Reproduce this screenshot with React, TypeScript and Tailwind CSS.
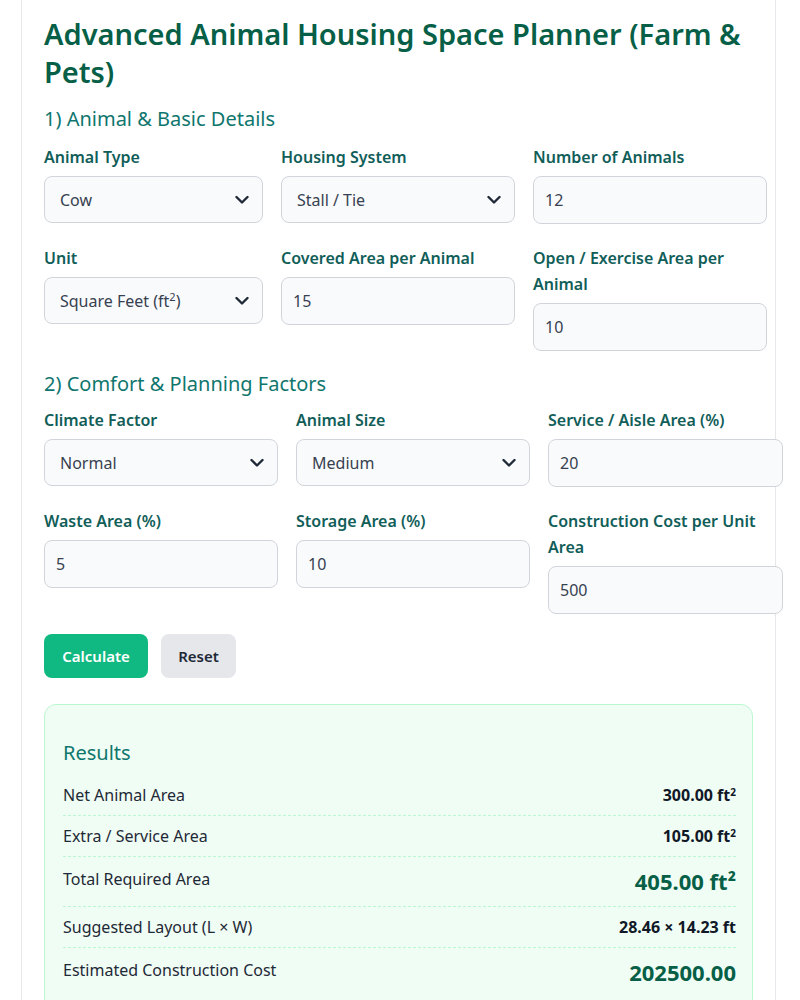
import React from "react";

const font = { fontFamily: '"Segoe UI", "Noto Sans", "Open Sans", sans-serif' };

function Chevron() {
  return (
    <svg
      className="pointer-events-none absolute right-[13px] top-1/2 -translate-y-1/2"
      width="14"
      height="9"
      viewBox="0 0 14 9"
      fill="none"
    >
      <path d="M1.5 1.5L7 7l5.5-5.5" stroke="#1f2937" strokeWidth="2.4" strokeLinecap="round" strokeLinejoin="round" />
    </svg>
  );
}

function SelectField({ label, value }: { label: string; value: React.ReactNode }) {
  return (
    <div className="flex flex-col">
      <label className="mb-[6px] text-[16px] font-semibold leading-[26px] text-[#115e59]">{label}</label>
      <div className="relative h-[47px] rounded-[8px] border border-[#d1d5db] bg-[#f9fafb]">
        <div className="flex h-full items-center pl-[15px] text-[16px] text-[#374151]">{value}</div>
        <Chevron />
      </div>
    </div>
  );
}

function InputField({ label, value }: { label: string; value: string }) {
  return (
    <div className="flex flex-col">
      <label className="mb-[6px] text-[16px] font-semibold leading-[26px] text-[#115e59]">{label}</label>
      <input
        readOnly
        value={value}
        className="h-[48px] rounded-[8px] border border-[#d1d5db] bg-[#f9fafb] px-[11px] text-[16px] text-[#374151] outline-none"
      />
    </div>
  );
}

function ResultRow({
  label,
  value,
  big,
  last,
}: {
  label: string;
  value: React.ReactNode;
  big?: boolean;
  last?: boolean;
}) {
  return (
    <div
      className={`flex justify-between py-[8px] ${big ? "items-start" : "items-center"} ${
        last ? "" : "border-b border-dashed border-[#bbf7d0]"
      }`}
    >
      <span className={`text-[16px] leading-[24px] text-[#1f2937] ${big ? "mt-[2px]" : ""}`}>{label}</span>
      <span
        className={
          big
            ? "text-[22px] font-bold leading-[33px] text-[#065f46]"
            : "text-[16px] font-bold leading-[24px] text-[#111827]"
        }
      >
        {value}
      </span>
    </div>
  );
}

export default function App() {
  return (
    <div className="min-h-screen bg-white" style={font}>
      <div className="ml-[21px] w-[755px] border-x border-[#e5e7eb] px-[22px] pb-10 pt-[15px]">
        <h1 className="text-[29px] font-semibold leading-[38px] text-[#065f46]">
          Advanced Animal Housing Space Planner (Farm &amp; Pets)
        </h1>

        <h2 className="mt-[14px] mb-[11px] text-[20px] leading-[28px] text-[#0f766e]">1) Animal &amp; Basic Details</h2>
        <div className="grid grid-cols-[219px_234px_234px] items-start gap-x-[18px] gap-y-[21px]">
          <SelectField label="Animal Type" value="Cow" />
          <SelectField label="Housing System" value="Stall / Tie" />
          <InputField label="Number of Animals" value="12" />
          <SelectField
            label="Unit"
            value={
              <span>
                Square Feet (ft<sup className="text-[11px]">2</sup>)
              </span>
            }
          />
          <InputField label="Covered Area per Animal" value="15" />
          <InputField label="Open / Exercise Area per Animal" value="10" />
        </div>

        <h2 className="mt-[19px] mb-[9px] text-[20px] leading-[28px] text-[#0f766e]">2) Comfort &amp; Planning Factors</h2>
        <div className="grid grid-cols-[234px_234px_235px] items-start gap-x-[18px] gap-y-[21px]">
          <SelectField label="Climate Factor" value="Normal" />
          <SelectField label="Animal Size" value="Medium" />
          <InputField label="Service / Aisle Area (%)" value="20" />
          <InputField label="Waste Area (%)" value="5" />
          <InputField label="Storage Area (%)" value="10" />
          <InputField label="Construction Cost per Unit Area" value="500" />
        </div>

        <div className="mt-[20px] flex gap-[13px]">
          <button className="h-[44px] w-[104px] rounded-[8px] bg-[#10b981] text-[15px] font-semibold text-white">
            Calculate
          </button>
          <button className="h-[44px] w-[75px] rounded-[8px] bg-[#e5e7eb] text-[15px] font-semibold text-[#1f2937]">
            Reset
          </button>
        </div>

        <div className="mt-[26px] rounded-[12px] border border-[#bbf7d0] bg-[#f0fdf4] pl-[18px] pr-[16px] pb-[14px] pt-[34px]">
          <h3 className="mb-[8px] text-[20px] leading-[28px] text-[#0f766e]">Results</h3>
          <ResultRow
            label="Net Animal Area"
            value={
              <span>
                300.00 ft<sup className="text-[10px]">2</sup>
              </span>
            }
          />
          <ResultRow
            label="Extra / Service Area"
            value={
              <span>
                105.00 ft<sup className="text-[10px]">2</sup>
              </span>
            }
          />
          <ResultRow label="Total Required Area" value="405.00 ft²" big />
          <ResultRow label="Suggested Layout (L × W)" value="28.46 × 14.23 ft" />
          <ResultRow label="Estimated Construction Cost" value="202500.00" big last />
        </div>
      </div>
    </div>
  );
}
